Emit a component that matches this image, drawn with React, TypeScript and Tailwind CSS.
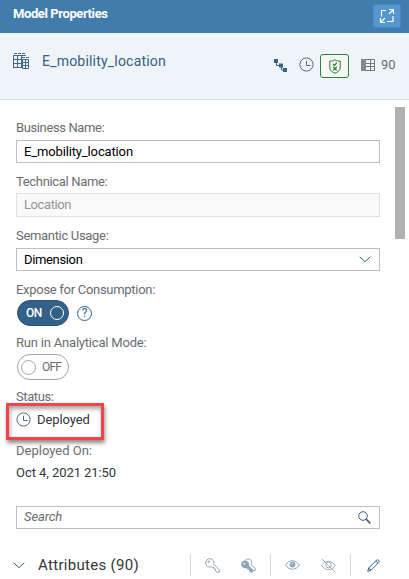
import type { ReactNode } from 'react';

function Clock({ className = '' }: { className?: string }) {
  return (
    <svg className={`shrink-0 ${className}`} width="16" height="16" viewBox="0 0 16 16" fill="none" stroke="#5b6776" strokeWidth="1">
      <circle cx="7.500" cy="7.500" r="6.600" />
      <path d="M7.500 3.800V8.500H11.500" />
    </svg>
  );
}

function Chevron({ className = '' }: { className?: string }) {
  return (
    <svg className={`shrink-0 ${className}`} width="12" height="7" viewBox="0 0 12 7" fill="none" stroke="#346187" strokeWidth="1">
      <path d="M.7 .8L6 5.700L11.300 .8" />
    </svg>
  );
}

function Label({ children, className = '' }: { children: ReactNode; className?: string }) {
  return <div className={`h-4 text-[13px] leading-4 whitespace-nowrap text-[#6a6d70] ${className}`}>{children}</div>;
}

function TableIcon() {
  return (
    <svg className="shrink-0" width="17" height="17" viewBox="0 0 17 17" fill="none" stroke="#41688c">
      <path d="M1 .5H12" strokeDasharray="3 1" />
      <path d="M0 2.500H13M.5 2V14.500M0 6.500H8M0 10.500H8M0 14.500H8M4.500 2V15M8.500 2V15" />
      <path d="M9 4.500H16" strokeDasharray="3 1" />
      <path d="M9.500 6.500H15.500V15.500H9.500ZM9.500 9.500H15.500M9.500 12.500H15.500M12.500 6.500V15.500" />
    </svg>
  );
}

function Shield() {
  return (
    <svg width="12" height="15" viewBox="0 0 12 15" fill="none" stroke="#2b7d2b" strokeWidth="1">
      <path d="M6 .7C4.500 2 2.500 2.200 .8 2V9C.8 11.500 3.500 13.300 6 14.200C8.500 13.300 11.200 11.500 11.200 9V2C9.500 2.200 7.500 2 6 .7Z" />
      <path d="M4 5L5.300 6.300L8 3.600M4.200 8L7.800 11.400M7.800 8L4.200 11.400" strokeWidth="1.200" />
    </svg>
  );
}

function Header() {
  return (
    <header className="flex h-[33px] items-center justify-between bg-[#427cac] pr-2 pl-[13px]">
      <h1 className="relative -top-[3px] text-[13px] font-bold tracking-[-0.4px] text-white">Model Properties</h1>
      <button className="relative -top-[1px] flex h-6 w-7 items-center justify-center rounded-[3px] border border-[#3f8ccb] bg-[#5496cd]">
        <svg width="16" height="16" viewBox="0 0 16 16" fill="none" stroke="white" strokeWidth="1.200">
          <path d="M7 2.500H2.500V8.500M14 8V13.500H8M10 1.500H14.500V6M14.500 1.500L10 6M1.500 10V14.500H6M1.500 14.500L6 10" />
        </svg>
      </button>
    </header>
  );
}

function ObjectBar() {
  return (
    <section className="flex h-[67px] items-center border-b border-[#d3e1ec] bg-[#eff4f9] pr-[13px] pl-[13px]">
      <div className="relative -top-[5px]"><TableIcon /></div>
      <span className="relative -top-[5px] ml-3 text-[14px] tracking-[0.2px] text-[#346187]">E_mobility_location</span>
      <div className="ml-auto flex items-center">
        <svg className="relative -top-px" width="13" height="14" viewBox="0 0 13 14" fill="none" stroke="#346187">
          <path d="M2.500 4V7.500H6M7.500 8V12H10" />
          <path fill="#346187" stroke="none" d="M0 1H4V5H0ZM5 5.500H9V9.500H5ZM9 10H13V14H9Z" />
        </svg>
        <Clock className="relative -top-px ml-3" />
        <div className="ml-[5px] flex h-6 w-[29px] items-center justify-center rounded-[3px] border border-[#2b8537] bg-[#f7f7f7]"><Shield /></div>
        <svg className="relative -top-[1px] ml-3" width="14" height="12" viewBox="0 0 14 12" fill="none" stroke="#74777a">
          <path d="M.5 .5H13.500V11.500H.5ZM5 4.500H13.500M5 7.500H13.500M9.500 .5V12" />
          <path fill="#85888b" stroke="none" d="M0 0H5V12H0Z" />
        </svg>
        <span className="relative -top-px ml-[6px] w-[15px] text-[13px] text-[#6a6d70]">90</span>
      </div>
    </section>
  );
}

function Toolbar() {
  return (
    <div className="mt-[23px] flex h-[26px] items-center">
      <Chevron className="-ml-[3px]" />
      <h2 className="ml-[13px] w-[152px] shrink-0 text-[15px] tracking-[0.3px] whitespace-nowrap text-[#32363a]">Attributes (90)</h2>
      <i className="h-[22px] w-px shrink-0 bg-[#d9d9d9]" />
      <svg className="ml-[14px] shrink-0" width="15" height="15" viewBox="0 0 15 15" fill="none" stroke="#8ea5b9">
        <path d="M8.800 6.300A4.200 4.200 0 1 0 6.300 8.800L7.500 9.500H9V11.200H10.500V12.800L11.800 14.300H14.300V11.800Z" />
        <circle cx="3.700" cy="3.700" r=".8" />
      </svg>
      <svg className="ml-[21px] shrink-0" width="15" height="15" viewBox="0 0 15 15">
        <path d="M4 2.500C5.500 .5 9 .5 10 2.500C11 4 10.500 5.500 10 6.500L14.200 10.500V12.500H12L9 9.500" fill="none" stroke="#8ea5b9" />
        <path fill="#8ea5b9" fillRule="evenodd" d="M4.200 2.500A4 4 0 0 1 8 7.500L12 12V14.500H9.500L8 13V11.500H6.500L5.500 10A3.900 3.900 0 1 1 4.200 2.500ZM2.500 5V6.500H4V5Z" />
      </svg>
      <i className="ml-[14px] h-[22px] w-px shrink-0 bg-[#d9d9d9]" />
      <svg className="ml-[14px] shrink-0" width="15" height="12" viewBox="0 0 15 12" fill="none" stroke="#8ea5b9">
        <path d="M.7 6C4 .3 11 .3 14.300 6C11 11.700 4 11.700 .7 6Z" /><circle cx="7.500" cy="5.500" r="2.500" fill="#8ea5b9" />
        <path d="M6.500 4.500H7.500" stroke="white" />
      </svg>
      <svg className="ml-[21px] shrink-0" width="15" height="15" viewBox="0 0 15 15" fill="none" stroke="#9caebf">
        <path d="M.7 7.500C4 2 11 2 14.300 7.500C11 13 4 13 .7 7.500Z" /><circle cx="7.500" cy="7" r="2.800" /><path d="M.7 .7L14.300 14.300" />
      </svg>
      <i className="ml-[14px] h-[22px] w-px shrink-0 bg-[#d9d9d9]" />
      <svg className="ml-4 shrink-0" width="13" height="13" viewBox="0 0 13 13" fill="none" stroke="#346187">
        <path d="M.7 12.300L1.700 9L9.500 1.200Q10.500 .3 11.700 1.300Q12.700 2.500 11.700 3.500L4 11.200ZM8.800 2L11 4.200M1.700 9L4 11.200" />
      </svg>
    </div>
  );
}

export default function App() {
  return (
    <main className="h-[579px] w-[409px] overflow-hidden bg-white font-[Roboto,sans-serif]">
      <Header />
      <ObjectBar />
      <div className="flex">
        <div className="flex w-[395px] flex-col pr-[15px] pl-4">
          <Label className="mt-5 tracking-[-0.38px]">Business Name:</Label>
          <div className="mt-1 flex h-[23px] items-center border border-[#bfbfbf] px-[7px] text-[13px] tracking-[-0.14px] text-black">E_mobility_location</div>
          <Label className="mt-[11px] tracking-[-0.33px]">Technical Name:</Label>
          <div className="mt-[3px] flex h-6 items-center border border-[#dfdfdf] bg-[#fafafa] px-[7px] text-[13px] tracking-[-0.4px] text-[#949494]">Location</div>
          <Label className="mt-[11px] tracking-[-0.32px]">Semantic Usage:</Label>
          <div className="mt-1 flex h-[23px] items-center justify-between border border-[#bfbfbf] pr-[8px] pl-[7px] text-[13px] tracking-[-0.35px] text-black">
            Dimension<Chevron />
          </div>
          <Label className="mt-[11px] tracking-[-0.29px]">Expose for Consumption:</Label>
          <div className="mt-[2px] flex h-[26px] items-center">
            <div className="ml-px flex h-[26px] w-[52px] items-center rounded-full border border-[#285277] bg-[#346187] pr-1 pl-2">
              <span className="text-[12px] font-medium tracking-[-0.5px] text-white">ON</span>
              <i className="ml-auto size-[14px] rounded-full border border-white" />
            </div>
            <div className="ml-2 flex size-[15px] items-center justify-center rounded-full border border-[#346187] text-[12px] leading-none text-[#346187]">?</div>
          </div>
          <Label className="mt-[9px] tracking-[-0.2px]">Run in Analytical Mode:</Label>
          <div className="mt-[3px] ml-px flex h-[26px] w-[52px] items-center rounded-full border border-[#a5a5a5] px-[3px]">
            <i className="size-[15px] shrink-0 rounded-full border border-[#a5a5a5]" />
            <span className="ml-[6px] text-[12px] tracking-[-0.8px] text-[#6a6d70]">OFF</span>
          </div>
          <Label className="mt-[9px] tracking-[-0.4px]">Status:</Label>
          <div className="-mt-[2px] -ml-[10px] flex h-[37px] w-[98px] items-center border-[3px] border-[#f84346] pl-[7px] shadow-[1px_3px_4px_rgba(0,0,0,0.45),inset_1px_3px_4px_rgba(0,0,0,0.35)]">
            <Clock className="relative -top-[2px]" />
            <span className="relative -top-[2px] ml-[5px] text-[13px] tracking-[-0.1px] text-[#32363a]">Deployed</span>
          </div>
          <Label className="mt-[3px]">Deployed On:</Label>
          <div className="mt-[6px] h-4 text-[13px] leading-4 tracking-[-0.06px] text-[#32363a]">Oct 4, 2021 21:50</div>
          <div className="mt-[25px] flex h-[23px] items-center justify-between border border-[#bfbfbf] pr-2 pl-[7px] text-[13px] tracking-[-0.1px] text-[#6a6d70] italic">
            <span className="relative -top-px">Search</span>
            <svg width="13" height="13" viewBox="0 0 13 13" fill="none" stroke="#346187"><circle cx="5" cy="5" r="4.300" /><path d="M8 8L12.300 12.300" strokeWidth="1.700" /></svg>
          </div>
          <Toolbar />
        </div>
        <div className="mt-[7px] h-[132px] w-[10px] bg-[#b1b1b1]" />
      </div>
    </main>
  );
}
